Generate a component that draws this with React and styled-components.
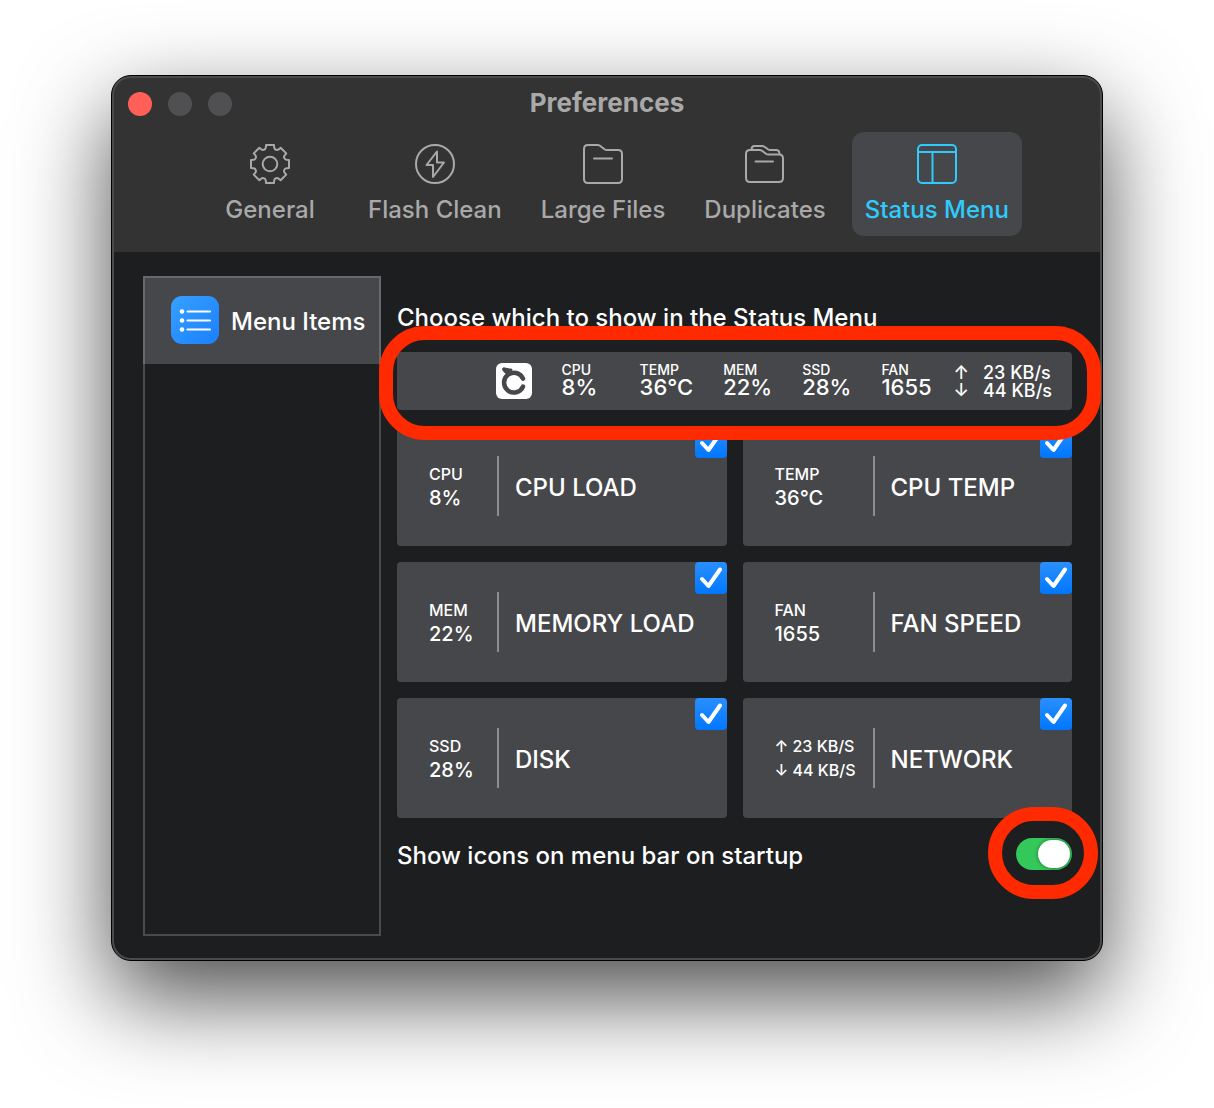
import React, { useState } from "react";
import styled, { createGlobalStyle } from "styled-components";

const GlobalStyle = createGlobalStyle`
  *, *::before, *::after { box-sizing: border-box; }
  body {
    margin: 0;
    background: #fff;
    color: #fff;
    font-family: Inter, "Liberation Sans", sans-serif;
    font-weight: 500;
  }
  button, input { font: inherit; }
`;

const Desktop = styled.main`
  min-height: 100vh;
  padding: 75px 111px 147px;
  overflow: hidden;
`;

const Window = styled.section`
  border: 1px solid #000;
  border-radius: 20px;
  background: #4b4b4c;
  padding: 2px;
  box-shadow: 0 36px 92px rgba(0, 0, 0, 0.7);
`;

const Header = styled.header`
  background: #333;
  border-radius: 17px 17px 0 0;
  padding: 10px 14px 16px;
`;

const TitleBar = styled.div`
  display: grid;
  grid-template-columns: 1fr auto 1fr;
  align-items: center;
  height: 32px;
`;

const Lights = styled.div`
  display: flex;
  gap: 16px;
`;

const Light = styled.button`
  width: 24px;
  height: 24px;
  padding: 0;
  border: 0;
  border-radius: 50%;
  background: ${(p) => p.$color};
`;

const Title = styled.h1`
  margin: 0;
  padding-bottom: 2px;
  font-size: 26px;
  line-height: 30px;
  font-weight: 700;
  color: #a9a9a9;
`;

const Toolbar = styled.nav`
  display: flex;
  justify-content: center;
  gap: 13px;
  margin-top: 12px;
  padding-left: 6px;
`;

const Tab = styled.button`
  display: flex;
  flex-direction: column;
  align-items: center;
  gap: 11px;
  min-width: 144px;
  height: 104px;
  padding: 12px 13px;
  border: 0;
  border-radius: 12px;
  background: ${(p) => (p.$active ? "#46474a" : "transparent")};
  color: ${(p) => (p.$active ? "#2fcbfd" : "#a9a9a9")};
  font-size: 24px;
  line-height: 30px;
  white-space: nowrap;
`;

const TabIcon = styled.svg`
  flex: none;
  width: 40px;
  height: 40px;
  fill: none;
  stroke: currentColor;
  stroke-width: 2;
  stroke-linejoin: round;
  stroke-linecap: round;
`;

const Body = styled.div`
  display: flex;
  gap: 16px;
  padding: 24px 28px 22px 29px;
  background: #1d1e20;
  border-radius: 0 0 17px 17px;
`;

const Sidebar = styled.aside`
  flex: none;
  width: 238px;
  min-height: 660px;
  border: 2px solid #4b4b4c;
`;

const SidebarItem = styled.button`
  display: flex;
  align-items: center;
  gap: 12px;
  width: calc(100% + 4px);
  height: 88px;
  margin: -2px;
  padding: 0 0 2px 26px;
  border: 2px solid #69696b;
  border-bottom: 0;
  background: #46474a;
  color: #fff;
  font-size: 24px;
  line-height: 30px;
  white-space: nowrap;
`;

const SidebarName = styled.span`
  padding-top: 4px;
`;

const ListBadge = styled.svg`
  flex: none;
  width: 48px;
  height: 48px;
`;

const Panel = styled.div`
  flex: 1;
  min-width: 0;
  padding-top: 27px;
`;

const Heading = styled.h2`
  margin: 0 0 19px;
  font-size: 24px;
  line-height: 30px;
  font-weight: 500;
  white-space: nowrap;
`;

const Highlighted = styled.div`
  position: relative;
`;

const Ring = styled.span`
  position: absolute;
  z-index: 2;
  inset: ${(p) => p.$inset};
  border: 14px solid #ff2a00;
  border-radius: 46px;
  pointer-events: none;
`;

const Strip = styled.div`
  display: flex;
  align-items: center;
  justify-content: flex-end;
  gap: 22px;
  height: 58px;
  padding-right: 20px;
  border-radius: 4px;
  background: #46474a;
  white-space: nowrap;
`;

const Readings = styled.div`
  display: flex;
  align-items: center;
  gap: 30px;
`;

const Logo = styled.svg`
  flex: none;
  width: 36px;
  height: 36px;
`;

const Reading = styled.div`
  min-width: 48px;
  padding-bottom: 4px;
`;

const ReadingName = styled.div`
  font-size: 14px;
  line-height: 16px;
`;

const ReadingValue = styled.div`
  font-size: 22px;
  line-height: 18px;
`;

const Speeds = styled.div`
  display: flex;
  gap: 14px;
  padding-top: 2px;
`;

const Speed = styled.div`
  font-size: 18px;
  line-height: 18px;
`;

const Cards = styled.div`
  display: grid;
  grid-template-columns: 1fr 1fr;
  gap: 16px;
  margin-top: 16px;
`;

const Card = styled.label`
  display: grid;
  grid-template-columns: ${(p) => p.$lead} 2px 1fr 32px;
  align-items: center;
  height: 120px;
  padding-left: 32px;
  border-radius: 4px;
  background: #46474a;
  white-space: nowrap;
`;

const Sample = styled.div`
  font-size: 20px;
  line-height: 25px;
`;

const SampleSmall = styled.div`
  font-size: 16px;
  line-height: 24px;
`;

const Divider = styled.span`
  height: 60px;
  background: #8d8d90;
`;

const CardName = styled.span`
  padding: 4px 0 0 16px;
  font-size: 24px;
  line-height: 30px;
`;

const CheckCell = styled.span`
  display: grid;
  align-self: start;
  width: 32px;
  height: 32px;
  > * { grid-area: 1 / 1; }
`;

const CheckInput = styled.input`
  appearance: none;
  width: 32px;
  height: 32px;
  margin: 0;
  border-radius: 4px;
  background: #6b6b6e;
  &:checked { background: linear-gradient(#2a8fff, #0077ff); }
`;

const Tick = styled.svg`
  width: 32px;
  height: 32px;
  fill: none;
  stroke: #fff;
  stroke-width: 4;
  stroke-linecap: round;
  stroke-linejoin: round;
  pointer-events: none;
`;

const Footer = styled.div`
  display: flex;
  align-items: center;
  justify-content: space-between;
  margin-top: 20px;
  height: 32px;
  font-size: 24px;
  line-height: 30px;
  white-space: nowrap;
`;

const FooterLabel = styled.label`
  padding-top: 4px;
`;

const ToggleHold = styled.span`
  position: relative;
  display: flex;
`;

const Toggle = styled.input`
  appearance: none;
  display: flex;
  align-items: center;
  width: 56px;
  height: 32px;
  margin: 0;
  padding: 0 2px;
  border-radius: 16px;
  background: #5b5b5e;
  &::before {
    content: "";
    width: 32px;
    height: 28px;
    border-radius: 14px;
    background: #fff;
    box-shadow: 0 0 3px 1px rgba(0, 0, 0, 0.3);
  }
  &:checked {
    justify-content: flex-end;
    background: #34c759;
  }
`;

function gearPath() {
  const parts = [];
  for (let i = 0; i < 8; i += 1) {
    const a = (i * Math.PI) / 4;
    const at = (x, y) =>
      `${(20 + x * Math.cos(a) - y * Math.sin(a)).toFixed(2)} ${(20 + x * Math.sin(a) + y * Math.cos(a)).toFixed(2)}`;
    parts.push(
      `${i === 0 ? "M" : "L"}${at(-4, -19)}L${at(4, -19)}L${at(4.2, -16.5)}` +
        `Q${at(4.6, -14.6)} ${at(5.9, -14.3)}Q${at(7.2, -13.6)} ${at(8.7, -14.6)}`
    );
  }
  return `${parts.join("")}Z`;
}

const GEAR = gearPath();

const tabs = [
  {
    name: "General",
    icon: (
      <>
        <path d={GEAR} />
        <circle cx="20" cy="20" r="7.3" />
      </>
    ),
  },
  {
    name: "Flash Clean",
    icon: (
      <>
        <circle cx="20" cy="20" r="19" />
        <path d="M22 7.5 11.5 21H18v12l11-14.5h-7z" />
      </>
    ),
  },
  {
    name: "Large Files",
    icon: (
      <>
        <path d="M5 1h9.500q1.500 0 2.500.7L21.500 5.300q1 .7 2.500.7H35q4 0 4 4v25q0 4-4 4H5q-4 0-4-4V5q0-4 4-4z" />
        <path d="M11 14.500h18" />
      </>
    ),
  },
  {
    name: "Duplicates",
    icon: (
      <>
        <path d="M5 6h9.500q1.500 0 2.500.7l4 3q1 .7 2.500.7H34q4 0 4 4V34q0 4-4 4H5q-4 0-4-4V10q0-4 4-4z" />
        <path d="M6.500 5.500Q6.500 2 9.500 2H17q1.500 0 2.500.7l3.500 2.600q1 .7 2.500.7H31q3.500 0 3.500 4" />
        <path d="M10.500 17.500H28" />
      </>
    ),
  },
  {
    name: "Status Menu",
    icon: (
      <>
        <rect x="1" y="1" width="38" height="38" rx="4" />
        <path d="M1 8h38M15.500 8v31" />
      </>
    ),
  },
];

const readings = [
  ["CPU", "8%"],
  ["TEMP", "36°C"],
  ["MEM", "22%"],
  ["SSD", "28%"],
  ["FAN", "1655"],
];

const cards = [
  { name: "CPU LOAD", top: "CPU", value: "8%" },
  { name: "CPU TEMP", top: "TEMP", value: "36°C" },
  { name: "MEMORY LOAD", top: "MEM", value: "22%" },
  { name: "FAN SPEED", top: "FAN", value: "1655" },
  { name: "DISK", top: "SSD", value: "28%" },
  { name: "NETWORK", lines: ["↑ 23 KB/S", "↓ 44 KB/S"] },
];

function StatusCard({ item, wide }) {
  const [on, setOn] = useState(true);
  return (
    <Card $lead={wide ? "98px" : "68px"}>
      <div>
        {item.lines ? (
          item.lines.map((line) => <SampleSmall key={line}>{line}</SampleSmall>)
        ) : (
          <>
            <SampleSmall>{item.top}</SampleSmall>
            <Sample>{item.value}</Sample>
          </>
        )}
      </div>
      <Divider />
      <CardName>{item.name}</CardName>
      <CheckCell>
        <CheckInput type="checkbox" checked={on} onChange={() => setOn(!on)} />
        {on && (
          <Tick viewBox="0 0 32 32" aria-hidden="true">
            <path d="M7 17 13.500 24 25 7.500" />
          </Tick>
        )}
      </CheckCell>
    </Card>
  );
}

export default function App() {
  const [tab, setTab] = useState("Status Menu");
  const [startup, setStartup] = useState(true);
  return (
    <>
      <GlobalStyle />
      <Desktop>
        <Window>
          <Header>
            <TitleBar>
              <Lights>
                <Light $color="#ff5f57" aria-label="Close" />
                <Light $color="#505052" aria-label="Minimize" />
                <Light $color="#505052" aria-label="Zoom" />
              </Lights>
              <Title>Preferences</Title>
            </TitleBar>
            <Toolbar>
              {tabs.map((t) => (
                <Tab key={t.name} $active={t.name === tab} onClick={() => setTab(t.name)}>
                  <TabIcon viewBox="0 0 40 40" aria-hidden="true">{t.icon}</TabIcon>
                  {t.name}
                </Tab>
              ))}
            </Toolbar>
          </Header>
          <Body>
            <Sidebar>
              <SidebarItem>
                <ListBadge viewBox="0 0 48 48" aria-hidden="true">
                  <defs>
                    <linearGradient id="badge" x1="0" y1="0" x2="1" y2="1">
                      <stop offset="0" stopColor="#37a0ff" />
                      <stop offset="1" stopColor="#1a80ff" />
                    </linearGradient>
                  </defs>
                  <rect width="48" height="48" rx="11" fill="url(#badge)" />
                  <g fill="#fff">
                    <circle cx="11" cy="15.500" r="2.300" />
                    <circle cx="11" cy="24.500" r="2.300" />
                    <circle cx="11" cy="33.500" r="2.300" />
                  </g>
                  <path
                    d="M16.500 15.500H39M16.500 24.500H39M16.500 33.500H39"
                    stroke="#fff"
                    strokeWidth="2.200"
                    strokeLinecap="round"
                  />
                </ListBadge>
                <SidebarName>Menu Items</SidebarName>
              </SidebarItem>
            </Sidebar>
            <Panel>
              <Heading>Choose which to show in the Status Menu</Heading>
              <Highlighted>
                <Strip>
                  <Readings>
                    <Logo viewBox="0 0 36 36" aria-hidden="true">
                      <rect width="36" height="36" rx="6" fill="#fff" />
                      <g fill="none" stroke="#46474a" strokeLinecap="round" strokeLinejoin="round">
                        <path d="M27 15.600A9.900 9.900 0 1 0 27 23.600" strokeWidth="4.500" />
                        <path d="M7.800 6.300Q8.800 8.500 11.500 10" strokeWidth="3.400" />
                        <path d="M8 6Q11.500 6.800 15 7" strokeWidth="3" />
                        <path d="M10 7.800L13 10" strokeWidth="4" />
                      </g>
                    </Logo>
                    {readings.map(([name, value]) => (
                      <Reading key={name}>
                        <ReadingName>{name}</ReadingName>
                        <ReadingValue>{value}</ReadingValue>
                      </Reading>
                    ))}
                  </Readings>
                  <Speeds>
                    <Speed>
                      <div>↑</div>
                      <div>↓</div>
                    </Speed>
                    <Speed>
                      <div>23 KB/s</div>
                      <div>44 KB/s</div>
                    </Speed>
                  </Speeds>
                </Strip>
                <Ring $inset="-26px -29px -30px -18px" />
              </Highlighted>
              <Cards>
                {cards.map((c, i) => (
                  <StatusCard key={c.name} item={c} wide={i % 2 === 1} />
                ))}
              </Cards>
              <Footer>
                <FooterLabel htmlFor="startup">Show icons on menu bar on startup</FooterLabel>
                <ToggleHold>
                  <Toggle
                    id="startup"
                    type="checkbox"
                    role="switch"
                    checked={startup}
                    onChange={() => setStartup(!startup)}
                  />
                  <Ring $inset="-31px -26px -29px -28px" />
                </ToggleHold>
              </Footer>
            </Panel>
          </Body>
        </Window>
      </Desktop>
    </>
  );
}
